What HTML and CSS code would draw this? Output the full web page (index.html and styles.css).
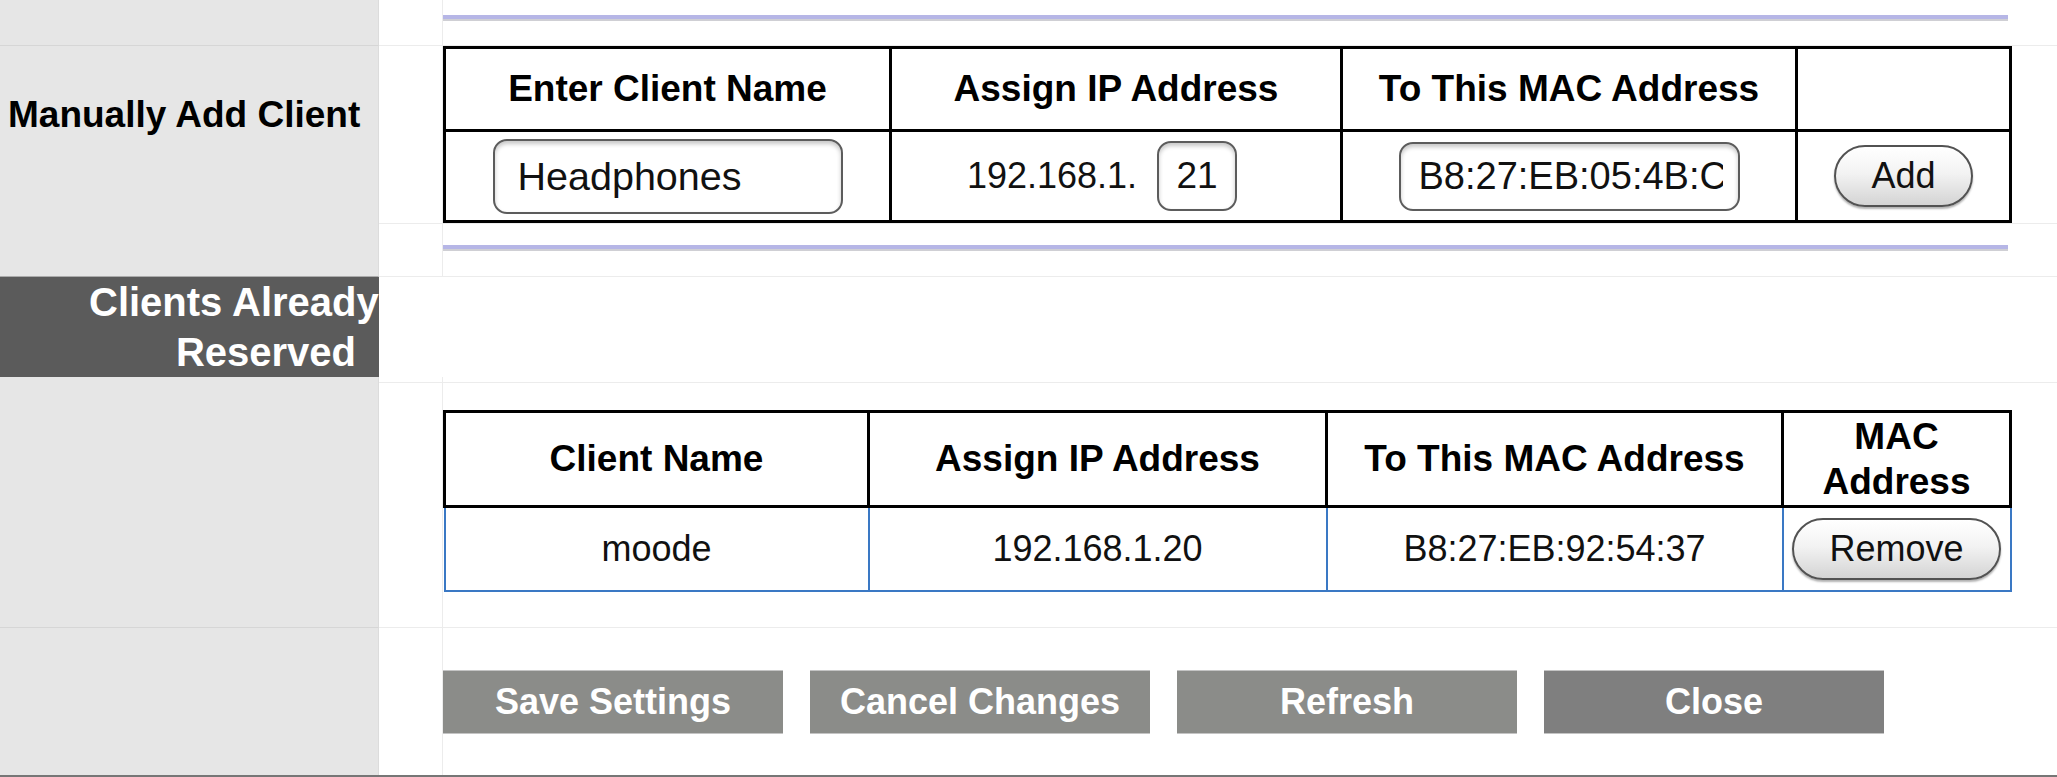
FILE: index.html
```html
<!DOCTYPE html>
<html lang="en">
<head>
<meta charset="utf-8">
<title>DHCP Reservation</title>
<link rel="stylesheet" href="styles.css">
</head>
<body>
<div class="page">
  <div class="row r0">
    <div class="label"></div>
    <div class="gap"></div>
    <div class="main pad-top-rule1"><div class="rule"></div></div>
  </div>

  <div class="row r1">
    <div class="label"><span class="label-text">Manually Add Client</span></div>
    <div class="gap"></div>
    <div class="main">
      <table class="grid add-table">
        <colgroup><col class="a1"><col class="a2"><col class="a3"><col class="a4"></colgroup>
        <thead>
          <tr><th>Enter Client Name</th><th>Assign IP Address</th><th>To This MAC Address</th><th></th></tr>
        </thead>
        <tbody>
          <tr>
            <td><input class="field name-field" type="text" value="Headphones"></td>
            <td class="ip-cell"><span class="ip"><span>192.168.1.</span><input class="field octet-field" type="text" value="21"></span></td>
            <td><input class="field mac-field" type="text" value="B8:27:EB:05:4B:C0"></td>
            <td><button class="pill" type="button">Add</button></td>
          </tr>
        </tbody>
      </table>
    </div>
  </div>

  <div class="row r2">
    <div class="label label-dark-edge"></div>
    <div class="gap"></div>
    <div class="main pad-top-rule2"><div class="rule"></div></div>
  </div>

  <div class="row r3">
    <div class="band"><div class="band-text">Clients Already<br>Reserved</div></div>
    <div class="band-rest"></div>
  </div>

  <div class="row r4">
    <div class="label"></div>
    <div class="gap"></div>
    <div class="main pad-top-table">
      <table class="grid list-table">
        <colgroup><col class="b1"><col class="b2"><col class="b3"><col class="b4"></colgroup>
        <thead>
          <tr><th>Client Name</th><th>Assign IP Address</th><th>To This MAC Address</th><th class="two-line">MAC<br>Address</th></tr>
        </thead>
        <tbody>
          <tr>
            <td>moode</td>
            <td>192.168.1.20</td>
            <td>B8:27:EB:92:54:37</td>
            <td><button class="pill" type="button">Remove</button></td>
          </tr>
        </tbody>
      </table>
    </div>
  </div>

  <div class="row r5">
    <div class="label label-last"></div>
    <div class="gap gap-last"></div>
    <div class="main main-last">
      <div class="actions">
        <button class="action" type="button">Save Settings</button>
        <button class="action" type="button">Cancel Changes</button>
        <button class="action" type="button">Refresh</button>
        <button class="action action-close" type="button">Close</button>
      </div>
    </div>
  </div>
</div>
</body>
</html>
```

FILE: styles.css
```css
* { box-sizing: border-box; }

html, body {
  margin: 0;
  padding: 0;
  background: #ffffff;
}

body {
  font-family: "Liberation Sans", Arial, Helvetica, sans-serif;
  color: #000;
  width: 2057px;
  height: 777px;
  overflow: hidden;
}

.row {
  display: grid;
  grid-template-columns: 379px 64px 1fr;
}

.label {
  background: #e6e6e6;
  border-right: 1px solid #dcdcdc;
  border-bottom: 1px solid #d6d6d6;
}

.label-dark-edge { border-bottom-color: #ababab; }

.gap {
  border-right: 1px solid #ececec;
  border-bottom: 1px solid #ececec;
}

.main {
  border-bottom: 1px solid #ececec;
}

.r0 { height: 46px; }
.r1 { height: 177px; }
.r2 { height: 54px; }
.r3 { height: 100px; }
.r4 { height: 251px; }
.r5 { height: 149px; border-bottom: 2px solid #767676; }

.label-last, .gap-last, .main-last { border-bottom: none; }

.pad-top-rule1 { padding-top: 15px; }
.pad-top-rule2 { padding-top: 22px; }
.pad-top-table { padding-top: 33px; }

.rule {
  width: 1565px;
  height: 6px;
  background: #b6b6e6;
  border-bottom: 2px solid #cfcfd4;
}

.label-text {
  display: block;
  padding: 45px 0 0 8px;
  font-size: 37px;
  font-weight: bold;
  line-height: 1.3;
  white-space: nowrap;
}

/* dark section band */
.band {
  background: #5b5b5b;
  border-bottom: 1px solid #ababab;
  display: flex;
  align-items: center;
  padding: 0 23px 5px 89px;
  min-width: 0;
}

.band-text {
  width: 100%;
  color: #fff;
  font-size: 40px;
  font-weight: bold;
  line-height: 50px;
  text-align: right;
  white-space: nowrap;
}

.band-rest {
  grid-column: 2 / 4;
  border-bottom: 1px solid #ececec;
}

/* tables */
.grid {
  border-collapse: collapse;
  table-layout: fixed;
  width: 1566px;
}

.grid th, .grid td {
  border: 3px solid #000;
  padding: 0;
  text-align: center;
  vertical-align: middle;
  font-size: 36px;
}

.grid th { font-weight: bold; font-size: 37px; }
.grid td { font-weight: normal; color: #111; }

.add-table .a1 { width: 446px; }
.add-table .a2 { width: 451px; }
.add-table .a3 { width: 455px; }
.add-table .a4 { width: 214px; }

.add-table thead tr { height: 83px; }
.add-table tbody tr { height: 91px; }

.list-table .b1 { width: 424px; }
.list-table .b2 { width: 458px; }
.list-table .b3 { width: 456px; }
.list-table .b4 { width: 228px; }

.list-table thead tr { height: 95px; }
.list-table tbody tr { height: 84px; }

.list-table .two-line { line-height: 45px; }

.list-table tbody td {
  border: 2px solid #3a78c4;
}

/* inputs */
.field {
  font-family: inherit;
  color: #111;
  background: #fff;
  border: 2px solid #5c5c5c;
  border-radius: 14px;
  box-shadow: inset 0 3px 4px rgba(0, 0, 0, 0.22);
  outline: none;
  vertical-align: middle;
}

.name-field {
  width: 350px;
  height: 75px;
  font-size: 39.5px;
  padding: 0 0 0 23px;
}

.ip-cell { padding-right: 28px !important; }

.ip {
  display: inline-flex;
  align-items: center;
  gap: 20px;
}

.octet-field {
  width: 80px;
  height: 70px;
  font-size: 37px;
  text-align: center;
  padding: 0;
}

.mac-field {
  width: 341px;
  height: 69px;
  font-size: 38px;
  padding: 0 15px 0 18px;
}

.pill {
  font-family: inherit;
  font-size: 36px;
  color: #111;
  height: 62px;
  padding: 0 35px;
  border: 2px solid #525252;
  border-radius: 32px;
  background: linear-gradient(to bottom, #ffffff 0%, #f3f3f3 45%, #d4d4d4 100%);
  box-shadow: 0 2px 2px rgba(0, 0, 0, 0.3);
  vertical-align: middle;
}

/* bottom actions */
.main-last { padding-top: 42px; }

.actions {
  display: flex;
  gap: 27px;
}

.action {
  width: 340px;
  height: 64px;
  font-family: inherit;
  font-size: 36px;
  font-weight: bold;
  color: #fff;
  background: #8b8c89;
  border: 1px solid #c4c4c4;
  border-left: none;
  border-right: none;
  padding: 0;
}

.action-close { background: #7f7f7f; }
```
